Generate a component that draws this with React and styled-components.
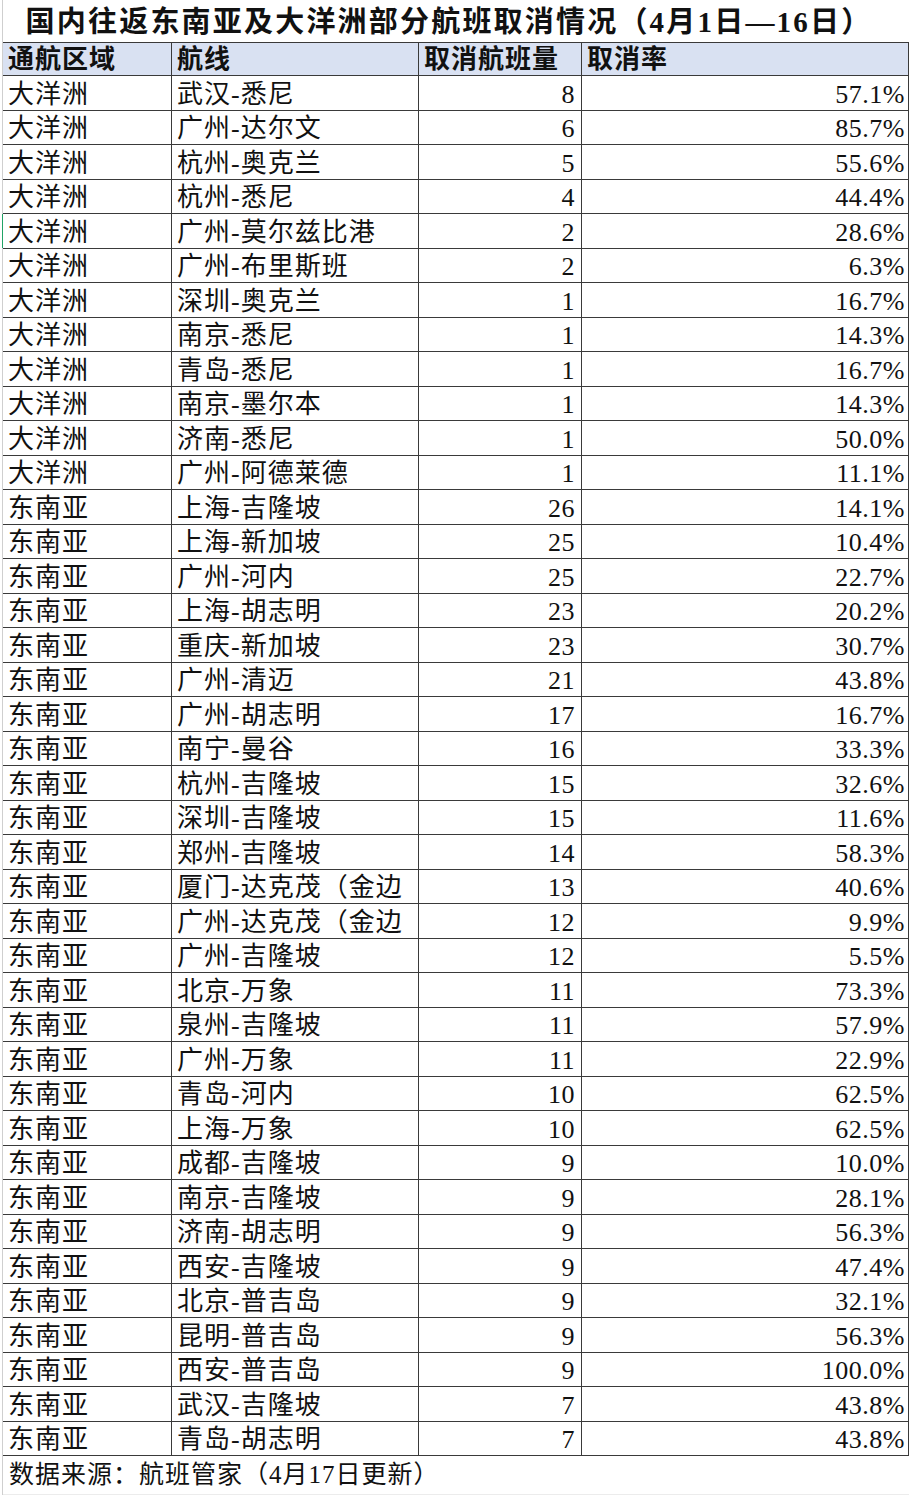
import React from 'react';
import styled, { createGlobalStyle } from 'styled-components';

const GlobalStyle = createGlobalStyle`
  html, body {
    margin: 0;
    padding: 0;
    background: #fff;
  }
  body {
    font-family: "Liberation Serif", "Noto Sans CJK SC", serif;
    color: #111;
  }
`;

const COLS = '169px 247px 163px 327px';

const Sheet = styled.div`
  width: 907px;
  margin-left: 2px;
  border-left: 1px solid #cfcfcf;
  min-height: 1495px;
  box-sizing: border-box;
`;

const Title = styled.h1`
  margin: 0;
  height: 42px;
  box-sizing: border-box;
  padding: 3px 14px 0 0;
  font-size: 29px;
  line-height: 38px;
  font-weight: 700;
  letter-spacing: 2.2px;
  text-align: center;
  white-space: nowrap;
`;

const Row = styled.div`
  display: grid;
  grid-template-columns: ${COLS};
  height: ${({ $height }) => $height};
  box-sizing: border-box;
  border-bottom: 1px solid #3a3a3a;
  border-top: ${({ $top }) => ($top ? '1px solid #3a3a3a' : 'none')};
  background: ${({ $head }) => ($head ? '#d9e1f2' : '#fff')};
  font-weight: ${({ $head }) => ($head ? 700 : 400)};
`;

const Cell = styled.div`
  display: flex;
  align-items: flex-end;
  justify-content: ${({ $align }) => ($align === 'right' ? 'flex-end' : 'flex-start')};
  padding: 0 ${({ $pr }) => $pr || 0}px 0 ${({ $align }) => ($align === 'right' ? 0 : 5)}px;
  border-right: 1px solid #3a3a3a;
  border-left: ${({ $mark }) => ($mark ? '1px solid #21a366' : 'none')};
  margin-left: ${({ $mark }) => ($mark ? '-1px' : 0)};
  overflow: hidden;
  white-space: nowrap;
  font-size: 26px;
  line-height: 30px;
  letter-spacing: ${({ $num }) => ($num ? '0.5px' : '1px')};
`;

const Footer = styled.div`
  height: 39px;
  box-sizing: border-box;
  padding: 3px 0 0 6px;
  font-size: 25px;
  line-height: 32px;
  letter-spacing: 1px;
  white-space: nowrap;
  border-bottom: 1px solid #ececec;
`;

const rows = [
  ['大洋洲', '武汉-悉尼', 8, '57.1%'],
  ['大洋洲', '广州-达尔文', 6, '85.7%'],
  ['大洋洲', '杭州-奥克兰', 5, '55.6%'],
  ['大洋洲', '杭州-悉尼', 4, '44.4%'],
  ['大洋洲', '广州-莫尔兹比港', 2, '28.6%'],
  ['大洋洲', '广州-布里斯班', 2, '6.3%'],
  ['大洋洲', '深圳-奥克兰', 1, '16.7%'],
  ['大洋洲', '南京-悉尼', 1, '14.3%'],
  ['大洋洲', '青岛-悉尼', 1, '16.7%'],
  ['大洋洲', '南京-墨尔本', 1, '14.3%'],
  ['大洋洲', '济南-悉尼', 1, '50.0%'],
  ['大洋洲', '广州-阿德莱德', 1, '11.1%'],
  ['东南亚', '上海-吉隆坡', 26, '14.1%'],
  ['东南亚', '上海-新加坡', 25, '10.4%'],
  ['东南亚', '广州-河内', 25, '22.7%'],
  ['东南亚', '上海-胡志明', 23, '20.2%'],
  ['东南亚', '重庆-新加坡', 23, '30.7%'],
  ['东南亚', '广州-清迈', 21, '43.8%'],
  ['东南亚', '广州-胡志明', 17, '16.7%'],
  ['东南亚', '南宁-曼谷', 16, '33.3%'],
  ['东南亚', '杭州-吉隆坡', 15, '32.6%'],
  ['东南亚', '深圳-吉隆坡', 15, '11.6%'],
  ['东南亚', '郑州-吉隆坡', 14, '58.3%'],
  ['东南亚', '厦门-达克茂（金边', 13, '40.6%'],
  ['东南亚', '广州-达克茂（金边', 12, '9.9%'],
  ['东南亚', '广州-吉隆坡', 12, '5.5%'],
  ['东南亚', '北京-万象', 11, '73.3%'],
  ['东南亚', '泉州-吉隆坡', 11, '57.9%'],
  ['东南亚', '广州-万象', 11, '22.9%'],
  ['东南亚', '青岛-河内', 10, '62.5%'],
  ['东南亚', '上海-万象', 10, '62.5%'],
  ['东南亚', '成都-吉隆坡', 9, '10.0%'],
  ['东南亚', '南京-吉隆坡', 9, '28.1%'],
  ['东南亚', '济南-胡志明', 9, '56.3%'],
  ['东南亚', '西安-吉隆坡', 9, '47.4%'],
  ['东南亚', '北京-普吉岛', 9, '32.1%'],
  ['东南亚', '昆明-普吉岛', 9, '56.3%'],
  ['东南亚', '西安-普吉岛', 9, '100.0%'],
  ['东南亚', '武汉-吉隆坡', 7, '43.8%'],
  ['东南亚', '青岛-胡志明', 7, '43.8%'],
];

// the green edge left over from the selected cell in the sheet
const MARKED_ROW = 4;

const App = () => (
  <>
    <GlobalStyle />
    <Sheet>
      <Title>国内往返东南亚及大洋洲部分航班取消情况（4月1日—16日）</Title>
      <Row $head $top $height="34px">
        <Cell>通航区域</Cell>
        <Cell>航线</Cell>
        <Cell>取消航班量</Cell>
        <Cell>取消率</Cell>
      </Row>
      {rows.map(([area, route, count, rate], i) => (
        <Row key={route + i} $height="34.5px">
          <Cell $mark={i === MARKED_ROW}>{area}</Cell>
          <Cell>{route}</Cell>
          <Cell $align="right" $pr={6} $num>{count}</Cell>
          <Cell $align="right" $pr={3} $num>{rate}</Cell>
        </Row>
      ))}
      <Footer>数据来源：航班管家（4月17日更新）</Footer>
    </Sheet>
  </>
);

export default App;
